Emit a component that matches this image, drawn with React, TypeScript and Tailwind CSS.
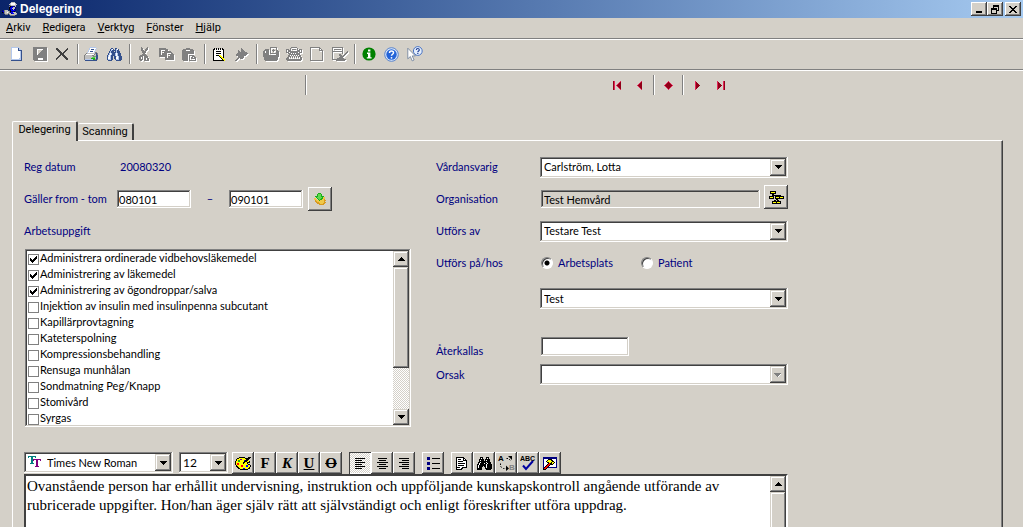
import { Fragment } from 'react'
import type { ReactNode } from 'react'
import clsx from 'clsx'

const RAISED =
  'bg-[#d4d0c8] shadow-[inset_-1px_-1px_#404040,inset_1px_1px_#fff,inset_-2px_-2px_#808080]'
const RAISED_THUMB =
  'bg-[#d4d0c8] shadow-[inset_-1px_-1px_#404040,inset_1px_1px_#d4d0c8,inset_-2px_-2px_#808080,inset_2px_2px_#fff]'
const SUNKEN =
  'shadow-[inset_-1px_-1px_#fff,inset_1px_1px_#808080,inset_-2px_-2px_#d4d0c8,inset_2px_2px_#404040]'
const DITHER =
  'bg-[conic-gradient(#fff_25%,#d4d0c8_0_50%,#fff_0_75%,#d4d0c8_0)] bg-size-[2px_2px]'

const COLORS: Record<string, string> = {
  k: '#000000',
  d: '#404040',
  g: '#808080',
  s: '#c0c0c0',
  w: '#ffffff',
  n: '#000080',
  b: '#0000ff',
  u: '#34508c',
  l: '#b4c8ec',
  y: '#ffff00',
  o: '#d89a20',
  t: '#f0c848',
  e: '#18b018',
  c: '#60d850',
  f: '#008000',
  r: '#900018',
  p: '#e02858',
  q: '#008080',
  v: '#800080',
  x: '#ff0000',
}

// one character is one pixel, a dot is transparent
function Pixels({ rows, etched }: { rows: string[]; etched?: boolean }) {
  const width = Math.max(...rows.map((r) => r.length))
  return (
    <svg
      width={width}
      height={rows.length}
      viewBox={`0 0 ${width} ${rows.length}`}
      shapeRendering="crispEdges"
      className={clsx('shrink-0', etched && 'drop-shadow-[1px_1px_0_#fff]')}
      aria-hidden="true"
    >
      {rows.map((row, y) =>
        row
          .split('')
          .map((ch, x) =>
            COLORS[ch] ? <rect key={`${x}-${y}`} x={x} y={y} width="1" height="1" fill={COLORS[ch]} /> : null,
          ),
      )}
    </svg>
  )
}

const art = {
  nurse: [
    '.........ssss...',
    '........swwwws..',
    '.......sswwwwss.',
    '........gsssss..',
    '.......gknnnns..',
    '.......knbbssn..',
    '.......kbbsssn..',
    '.......knbnsnn..',
    'n.gsss..kbbbbn..',
    'nbgssssgknnnk...',
    'kngsswsgnbbsss..',
    '..gsssgssnbbsss.',
    '...ggg.gssssssg.',
    '........ggggg...',
  ],
  newDoc: [
    'llllllll...',
    'lwwwwwwul..',
    'lwwwwwwull.',
    'lwwwwwwuuuu',
    'lwwwwwwwwlu',
    'lwwwwwwwwlu',
    'lwwwwwwwwlu',
    'lwwwwwwwwlu',
    'lwwwwwwwwlu',
    'lwwwwwwwwlu',
    'lwwwwwwwwlu',
    'lwwwwwwwllu',
    'llllllllllu',
    'uuuuuuuuuuu',
  ],
  save: [
    'gggggggggggggg',
    'gggggggggggggg',
    'gggg......gggg',
    'gggg.....ggggg',
    'gggg....gggggg',
    'gggg...ggggggg',
    'gggg..gggggggg',
    'gggg.ggggggggg',
    'gggggggggggggg',
    'gggggggggggggg',
    'gggggggggggggg',
    'gggggwwwwwgggg',
    'gggggwwwwwgggg',
    '.ggggggggggggg',
  ],
  remove: [
    'dd.........d.',
    'ddd.......dd.',
    '.ddd.....dd..',
    '..ddd...dd...',
    '...ddd.dd....',
    '....dddd.....',
    '....dddd.....',
    '...dd.ddd....',
    '..dd...ddd...',
    '.dd.....ddd..',
    'dd.......ddd.',
    'd.........dd.',
  ],
  printer: [
    '......llllll...',
    '.....lwwwwwwl..',
    '.....lwuuuwl...',
    '....lwwwwwwl...',
    '....lwuuuwl....',
    '...lwwwwwwlgg..',
    '..gssssssssgug.',
    '.gwwwwwwwwgsug.',
    'gsssssssggssuu.',
    'gssssssssggcuu.',
    'gssssssscccsuu.',
    'gsssssseeeesuu.',
    'glllllllleegug.',
    '.uuuuuuuuuuuu..',
  ],
  binoculars: [
    '....uu..uu.....',
    '...ulwu.ulwu...',
    '...uluuuuluu...',
    '..uluuu.uluuu..',
    '..uluuuuuluuu..',
    '.ulwluuulwluuu.',
    '.ulwluuulwluuu.',
    'ulwluuuulwluuu.',
    'ulwluu.uulwluuu',
    'uwwluu.uuwwluuu',
    'uwwluu.uuwwluuu',
    'ullluu..ullluuu',
    '.uuuu....uuuuu.',
  ],
  cut: [
    '..g.....g.',
    '..gg...gg.',
    '..gg..ggg.',
    '..ggg.gg..',
    '...gggg...',
    '...gggg...',
    '....gg....',
    '...gggg...',
    '.ggggggg..',
    'gggg.gggg.',
    'gg.g.gggg.',
    'gg.g.gg.gg',
    'gggg.gg.gg',
    '.gg..ggggg',
  ],
  copy: [
    'ggggggg........',
    'ggggggggg......',
    'gg....ggg......',
    'gg.ggggggggg...',
    'gg...gggggggg..',
    'gg.ggggg....gg.',
    'gg.ggggg.gggggg',
    'gggggggg...gggg',
    'gggggggg.gggggg',
    '......gg.gggggg',
    '......ggggggggg',
    '......ggggggggg',
  ],
  paste: [
    '....gggg.......',
    '.gggggggggg....',
    'gggg....gggg...',
    'gggggggggggg...',
    'gggggggggggg...',
    'gggggggggggg...',
    'gggggg.........',
    'gggggg.ggggg...',
    'gggggg.g..ggg..',
    'gggggg.g.gg.gg.',
    'gggggg.g.ggggg.',
    'gggggg.g.....g.',
    '.ggggg.ggggggg.',
  ],
  note: [
    '.k.k.k.k.k..',
    'kkwkwkwkwkk.',
    'kwwwwwwwwwk.',
    'kwwkkkkkwwk.',
    'kwwwwwwwwwk.',
    'kwwkkkkkwwk.',
    'kwwwwwwwwwk.',
    'kwwkkkyywwk.',
    'kwwwwwkyywk.',
    'kwwwwwwkyyk.',
    'kwwwwwwwkyy.',
    'kwwwwwwwwkyy',
    'kkkkkkkkkkky',
  ],
  pin: [
    '......g......',
    '......gg.....',
    '...g..ggg....',
    '...gg.gggg...',
    '...ggggggggg.',
    '..ggggggggggg',
    '.ggggggggggg.',
    '.gggggggggg..',
    '...gggggg....',
    '...gggggg....',
    '..gg.ggg.....',
    '.gg..........',
    'gg...........',
  ],
  archive: [
    '.......ggggggg..',
    '.......g.....g..',
    '..gggg.g..g..g..',
    '.ggggg.g.ggg.gg.',
    'gg.ggg.g..g..ggg',
    'gg.ggg.g.....ggg',
    'gggggg.ggggggggg',
    'gggggg.......ggg',
    'gggggggggggggggg',
    'gggggggggggggggg',
    '.gggggggggggggg.',
    '.gggggggggggggg.',
    '.gggggggggggggg.',
    '..gggggggggggg..',
  ],
  typewriter: [
    '.....gggggg.....',
    '....g......g....',
    'ggg.g.gggg.g.ggg',
    'g.ggg......ggg.g',
    'g.gggggggggggg.g',
    'ggg.gggggggg.ggg',
    '..ggg.g.g.gggg..',
    '...ggggggggggg..',
    '..gg.g.g.g.g.gg.',
    '..ggg.g.g.g.ggg.',
    '.gg.g.g.g.g.g.gg',
    'ggg...........gg',
    'gggggggggggggggg',
    '.gggggggggggggg.',
  ],
  page: [
    'gggggggggg...',
    'g........gg..',
    'g........g.g.',
    'g........gggg',
    'g...........g',
    'g...........g',
    'g...........g',
    'g...........g',
    'g...........g',
    'g...........g',
    'g...........g',
    'g...........g',
    'g...........g',
    'ggggggggggggg',
  ],
  approve: [
    'ggggggggggg.....',
    'g.........g.....',
    'g.ggggggg.g.....',
    'g.........g.....',
    'ggggggggggg....g',
    'g.........g...gg',
    'g.........g..gg.',
    'g......gg...gg..',
    'g......ggg.gg...',
    'g.......gggg....',
    'g......gggg.....',
    'g....ggggggg....',
    'gggggggggggggg..',
    '....ggggggggg...',
  ],
  first: ['rp.....p', 'rp....pr', 'rp...prr', 'rp..prrr', 'rp.prrrr', 'rp..prrr', 'rp...prr', 'rp....pr', 'rp.....p'],
  prev: ['....p', '...pr', '..prr', '.prrr', 'prrrr', '.prrr', '..prr', '...pr', '....p'],
  diamond: [
    '....p....',
    '...prp...',
    '..prrrp..',
    '.prrrrrp.',
    'prrrrrrrp',
    '.prrrrrp.',
    '..prrrp..',
    '...prp...',
    '....p....',
  ],
  next: ['p....', 'pr...', 'prr..', 'prrr.', 'prrrr', 'prrr.', 'prr..', 'pr...', 'p....'],
  last: ['p.....pr', 'pr....pr', 'prr...pr', 'prrr..pr', 'prrrr.pr', 'prrr..pr', 'prr...pr', 'pr....pr', 'p.....pr'],
  up: ['...k...', '..kkk..', '.kkkkk.', 'kkkkkkk'],
  down: ['kkkkkkk', '.kkkkk.', '..kkk..', '...k...'],
  downOff: ['ggggggg.', '.gggggw.', '..gggw..', '...gw...'],
  minimize: ['......', '......', '......', '......', '......', '......', 'kkkkkk', 'kkkkkk'],
  restore: ['..kkkkkk', '..kkkkkk', '..k....k', 'kkkkkk.k', 'kkkkkk.k', 'k....kkk', 'k....k..', 'k....k..', 'kkkkkk..'],
  close: ['kk....kk', '.kk..kk.', '..kkkk..', '...kk...', '..kkkk..', '.kk..kk.', 'kk....kk'],
  fetch: [
    '....eee.....',
    '...eccce....',
    '...eccce....',
    '.eeeccceee..',
    '..ecccccett.',
    'tt.eccceett.',
    'ttt.eceetto.',
    '.otttettttoo',
    '.oottttttto.',
    '..oootttttoo',
    '...oootttoo.',
    '.....ooooo..',
  ],
  tree: [
    '.kkkkkk........',
    '.kyyyyk........',
    '.kkkkkk........',
    '...kk..........',
    '...kkkkkkkkk...',
    'kkkkk.kkkkkkkkk',
    'kyyyk.kyyykyyyk',
    'kkkkk.kkkkkkkkk',
    '.......kk......',
    '.....kk.kk.....',
    '...kkkkkkkkk...',
    '...kyyykyyyk...',
    '...kkkkkkkkk...',
  ],
  truetype: [
    'qqqqqqqq.....',
    'q..qq..q.....',
    '...qq........',
    '...qqvvvvvvvv',
    '...qqv..vv..v',
    '...qq...vv...',
    '...qq...vv...',
    '..qqqq..vv...',
    '........vv...',
    '........vv...',
    '.......vvvv..',
  ],
  palette: [
    '....kkkkkk...kkk',
    '..kkyyyyyykkkkk.',
    '.kyyyvvyyyykkk..',
    '.kyeeyyyybkkky..',
    'kyyeeyyyykkkyyk.',
    'kyyyyyyykkyykkk.',
    'kyxxyyyykyyyk...',
    'kyxxyyyyyyyyykk.',
    '.kyyyyxxyyybbyyk',
    '.kkyyyxxyyybbyyk',
    '..kkyyyyyyyyyyk.',
    '...kkyyybbyyykk.',
    '.....kkkkkkkk...',
  ],
  left: ['kkkkkkkkkk', '..........', 'kkkkkkk...', '..........', 'kkkkkkkkkk', '..........', 'kkkkkkk...', '..........', 'kkkkkkkkkk', '..........', 'kkkkkkk...'],
  center: ['.kkkkkkkkk.', '...........', '..kkkkkkk..', '...........', 'kkkkkkkkkkk', '...........', '..kkkkkkk..', '...........', 'kkkkkkkkkkk', '...........', '..kkkkkkk..'],
  right: ['kkkkkkkkkk', '..........', '...kkkkkkk', '..........', 'kkkkkkkkkk', '..........', '...kkkkkkk', '..........', 'kkkkkkkkkk', '..........', '...kkkkkkk'],
  bullets: [
    'nnn..........',
    'nnn..kkkkkkkk',
    'nnn..........',
    '.............',
    '.............',
    'nnn..........',
    'nnn..kkkkkkkk',
    'nnn..........',
    '.............',
    '.............',
    'nnn..........',
    'nnn..kkkkkkkk',
    'nnn..........',
  ],
  phrase: [
    'kkkkkkkk....',
    'kwwwwwwkk...',
    'kwkkkwwkwk..',
    'kwwwwwwkkkk.',
    'kwkkkkkwwwk.',
    'kwwwwwwwwwk.',
    'kwkkkkkkkwk.',
    'kwwwwwwwwwk.',
    'kwkkkkkkwwk.',
    'kwwwwwwwwwk.',
    'kkkkwwkkkkk.',
    'kwwwwkk.....',
    'kkkkkk......',
  ],
  find: [
    '...kkk...kkk...',
    '...kwk...kwk...',
    '..kkkkk.kkkkk..',
    '..kwkkk.kwkkk..',
    '..kkkkkkkkkkk..',
    '.kkwkkkkkwkkkk.',
    '.kwkkkkwkkwkkk.',
    'kkwkkkkkkwkkkkk',
    'kwkkkkkkkwkkkkk',
    'kwkkkk.kkwkkkkk',
    'kwkkk...kwkkkkk',
    'kkkkk...kkkkkkk',
    'kkkkk....kkkkk.',
  ],
  macro: [
    'nnnnnnnnnnnnnn',
    'nnnnnnnnnnnnnn',
    'nwwwwkkkkwwwwn',
    'nwwwkyyykkwwwn',
    'nwwkyyyyykkwwn',
    'nwwwkkyykyykwn',
    'nwwwwkxkkykwwn',
    'nwwwkxxkkkwwwn',
    'nwwkxxkwwwwwwn',
    'nwkxxkwwwwwwwn',
    'nkxxknnnnnnnnn',
    'kxxk..........',
    'kkk...........',
  ],
  tick: ['......k', '.....kk', 'k...kkk', 'kk.kkk.', 'kkkkk..', '.kkk...', '..k....'],
}

function InfoIcon() {
  return (
    <svg width="14" height="14" viewBox="0 0 14 14" aria-hidden="true">
      <circle cx="7" cy="7" r="6.6" fill="#008000" />
      <path d="M6 2.5h2.4v2H6zM5 5.6h3.4v4.6h1.2v1.4H4.8v-1.4H6V7H5z" fill="#fff" />
    </svg>
  )
}

function HelpIcon() {
  return (
    <svg width="15" height="15" viewBox="0 0 15 15" aria-hidden="true">
      <circle cx="7.5" cy="7.5" r="6.8" fill="#d8e6fa" stroke="#5a84cc" />
      <circle cx="7.5" cy="7.5" r="5.2" fill="#2464d8" />
      <path d="M5.5 6c0-2.6 4-2.6 4-.2 0 1.5-2 1.4-2 3" fill="none" stroke="#fff" strokeWidth="1.5" />
      <circle cx="7.5" cy="10.8" r="0.9" fill="#fff" />
    </svg>
  )
}

function ContextHelpIcon() {
  return (
    <svg width="16" height="16" viewBox="0 0 16 16" aria-hidden="true">
      <circle cx="10.8" cy="5" r="4.4" fill="#e4eefc" stroke="#4a74c4" />
      <path d="M9.3 4c0-2 3-2 3-.1 0 1.1-1.5 1.1-1.5 2.3" fill="none" stroke="#1c3c94" strokeWidth="1.1" />
      <path d="M10.2 7h1.2v1.1h-1.2z" fill="#1c3c94" />
      <path d="M.8 2.2v10.6l2.6-2.3 1.8 4.4 1.9-.9-1.9-4.1h3.2z" fill="#fff" stroke="#6a7c98" strokeWidth="0.8" />
    </svg>
  )
}

function ReplaceIcon() {
  return (
    <svg width="18" height="16" viewBox="0 0 18 16" aria-hidden="true">
      <text x="1" y="6" fontSize="8" fontWeight="bold" fontFamily="Liberation Sans, sans-serif">
        A
      </text>
      <text x="12" y="15" fontSize="8" fontWeight="bold" fill="#808080" fontFamily="Liberation Sans, sans-serif">
        B
      </text>
      <path d="M3.500 8.500v3l3 2h3M9.500 3.500h2l2 2" fill="none" stroke="#000" strokeDasharray="1.500 1.500" />
      <path d="M9 10.500l3 3-3 2.500zM11 1h4v4z" />
    </svg>
  )
}

function SpellIcon() {
  return (
    <svg width="16" height="16" viewBox="0 0 16 16" aria-hidden="true">
      <text x="0" y="6" fontSize="7" fontWeight="bold" fontFamily="Liberation Sans, sans-serif">
        ABC
      </text>
      <path d="M3 10.500l3 3.500 7-8" fill="none" stroke="#0000a0" strokeWidth="2" />
    </svg>
  )
}

const menus = ['Arkiv', 'Redigera', 'Verktyg', 'Fönster', 'Hjälp']

const toolGroups: { label: string; icon: ReactNode }[][] = [
  [
    { label: 'Ny', icon: <Pixels rows={art.newDoc} /> },
    { label: 'Spara', icon: <Pixels rows={art.save} etched /> },
    { label: 'Ta bort', icon: <Pixels rows={art.remove} /> },
  ],
  [
    { label: 'Skriv ut', icon: <Pixels rows={art.printer} /> },
    { label: 'Sök', icon: <Pixels rows={art.binoculars} /> },
  ],
  [
    { label: 'Klipp ut', icon: <Pixels rows={art.cut} etched /> },
    { label: 'Kopiera', icon: <Pixels rows={art.copy} etched /> },
    { label: 'Klistra in', icon: <Pixels rows={art.paste} etched /> },
  ],
  [
    { label: 'Anteckning', icon: <Pixels rows={art.note} /> },
    { label: 'Fäst', icon: <Pixels rows={art.pin} etched /> },
  ],
  [
    { label: 'Arkivera', icon: <Pixels rows={art.archive} etched /> },
    { label: 'Diktat', icon: <Pixels rows={art.typewriter} etched /> },
    { label: 'Dokument', icon: <Pixels rows={art.page} etched /> },
    { label: 'Signera', icon: <Pixels rows={art.approve} etched /> },
  ],
  [
    { label: 'Information', icon: <InfoIcon /> },
    { label: 'Hjälp', icon: <HelpIcon /> },
    { label: 'Förklaring', icon: <ContextHelpIcon /> },
  ],
]

const tasks = [
  { name: 'Administrera ordinerade vidbehovsläkemedel', done: true },
  { name: 'Administrering av läkemedel', done: true },
  { name: 'Administrering av ögondroppar/salva', done: true },
  { name: 'Injektion av insulin med insulinpenna subcutant', done: false },
  { name: 'Kapillärprovtagning', done: false },
  { name: 'Kateterspolning', done: false },
  { name: 'Kompressionsbehandling', done: false },
  { name: 'Rensuga munhålan', done: false },
  { name: 'Sondmatning Peg/Knapp', done: false },
  { name: 'Stomivård', done: false },
  { name: 'Syrgas', done: false },
]

const formatGroups: { label: string; icon: ReactNode; pressed?: boolean }[][] = [
  [
    { label: 'Färg', icon: <Pixels rows={art.palette} /> },
    { label: 'Fet', icon: <span className="font-bold">F</span> },
    { label: 'Kursiv', icon: <span className="font-bold italic">K</span> },
    { label: 'Understruken', icon: <span className="font-bold underline">U</span> },
    { label: 'Genomstruken', icon: <span className="font-bold line-through">O</span> },
  ],
  [
    { label: 'Vänster', icon: <Pixels rows={art.left} />, pressed: true },
    { label: 'Centrera', icon: <Pixels rows={art.center} /> },
    { label: 'Höger', icon: <Pixels rows={art.right} /> },
  ],
  [{ label: 'Punktlista', icon: <Pixels rows={art.bullets} /> }],
  [
    { label: 'Frastext', icon: <Pixels rows={art.phrase} /> },
    { label: 'Sök text', icon: <Pixels rows={art.find} /> },
    { label: 'Ersätt', icon: <ReplaceIcon /> },
    { label: 'Stavning', icon: <SpellIcon /> },
    { label: 'Makro', icon: <Pixels rows={art.macro} /> },
  ],
]

const noteText =
  'Ovanstående person har erhållit undervisning, instruktion och uppföljande kunskapskontroll angående utförande av\nrubricerade uppgifter. Hon/han äger själv rätt att självständigt och enligt föreskrifter utföra uppdrag.'

function Divider() {
  return <span className="h-5 w-0.5 shrink-0 border-l border-r border-l-[#808080] border-r-white" />
}

function Combo({
  id,
  label,
  value,
  disabled,
  className,
  textClass = 'pl-1',
  icon,
}: {
  id: string
  label?: string
  value: string
  disabled?: boolean
  className?: string
  textClass?: string
  icon?: ReactNode
}) {
  return (
    <div className={clsx('relative h-[21px] shrink-0', className)}>
      <select
        id={id}
        aria-label={label}
        disabled={disabled}
        className={clsx('h-full w-full appearance-none bg-white pr-5 text-black opacity-100', SUNKEN, textClass)}
      >
        <option>{value}</option>
      </select>
      {icon && <span className="pointer-events-none absolute top-1 left-1">{icon}</span>}
      <span
        className={clsx(
          'pointer-events-none absolute top-0.5 right-0.5 bottom-0.5 grid w-4 place-items-center',
          RAISED_THUMB,
        )}
      >
        <Pixels rows={disabled ? art.downOff : art.down} />
      </span>
    </div>
  )
}

function ScrollButton({ label, rows }: { label: string; rows: string[] }) {
  return (
    <button aria-label={label} className={clsx('grid h-4 w-4 shrink-0 place-items-center', RAISED_THUMB)}>
      <Pixels rows={rows} />
    </button>
  )
}

function Field({ label, htmlFor, children }: { label: string; htmlFor?: string; children: ReactNode }) {
  return (
    <div className="flex h-8 items-center">
      <label htmlFor={htmlFor} className="w-[104px] shrink-0">
        {label}
      </label>
      {children}
    </div>
  )
}

function TitleBar() {
  return (
    <header className="flex h-[18px] shrink-0 items-center bg-linear-to-r from-[#0a246a] to-[#a6caf0] pr-0.5 pl-0.5">
      <Pixels rows={art.nurse} />
      <h1 className="ml-0.5 flex-1 font-['Liberation_Sans',Arial,sans-serif] text-[12px] font-bold text-white">
        Delegering
      </h1>
      <button aria-label="Minimera" className={clsx('grid h-3.5 w-4 place-items-center', RAISED)}>
        <Pixels rows={art.minimize} />
      </button>
      <button aria-label="Återställ" className={clsx('grid h-3.5 w-4 place-items-center', RAISED)}>
        <Pixels rows={art.restore} />
      </button>
      <button aria-label="Stäng" className={clsx('ml-0.5 grid h-3.5 w-4 place-items-center', RAISED)}>
        <Pixels rows={art.close} />
      </button>
    </header>
  )
}

function Toolbar() {
  return (
    <div className="flex h-[31px] shrink-0 items-center border-b border-[#808080] pl-[5px] shadow-[0_1px_#fff]">
      {toolGroups.map((group, i) => (
        <Fragment key={i}>
          {i > 0 && (
            <span className="flex w-1.5 justify-end pr-px">
              <Divider />
            </span>
          )}
          {group.map((tool) => (
            <button key={tool.label} aria-label={tool.label} className="grid h-[22px] w-[23px] place-items-center">
              {tool.icon}
            </button>
          ))}
        </Fragment>
      ))}
    </div>
  )
}

function RecordNav() {
  return (
    <div className="mt-[5px] mb-[26px] flex h-5 shrink-0 items-center pl-[305px]">
      <Divider />
      <div className="ml-[298px] flex items-center">
        <button aria-label="Första" className="grid w-6 place-items-center">
          <Pixels rows={art.first} />
        </button>
        <button aria-label="Föregående" className="mr-1 grid w-5 place-items-center">
          <Pixels rows={art.prev} />
        </button>
        <Divider />
        <button aria-label="Aktuell" className="grid w-[27px] place-items-center">
          <Pixels rows={art.diamond} />
        </button>
        <Divider />
        <button aria-label="Nästa" className="grid w-[27px] place-items-center">
          <Pixels rows={art.next} />
        </button>
        <button aria-label="Sista" className="grid w-5 place-items-center">
          <Pixels rows={art.last} />
        </button>
      </div>
    </div>
  )
}

function TaskList() {
  return (
    <div className={clsx('ml-px flex h-[178px] bg-white p-0.5 text-black', SUNKEN)}>
      <ul className="flex-1 overflow-hidden">
        {tasks.map((task) => (
          <li key={task.name}>
            <label className="flex h-4 gap-px pl-px">
              <span className="relative mt-[3px] h-[11px] w-[11px] shrink-0">
                <input
                  type="checkbox"
                  defaultChecked={task.done}
                  className="peer block h-full w-full appearance-none border border-[#808080] bg-white"
                />
                <span className="pointer-events-none absolute top-0.5 left-0.5 hidden peer-checked:block">
                  <Pixels rows={art.tick} />
                </span>
              </span>
              <span className="leading-[14px]">{task.name}</span>
            </label>
          </li>
        ))}
      </ul>
      <div className={clsx('flex w-4 flex-col', DITHER)}>
        <ScrollButton label="Upp" rows={art.up} />
        <div className={clsx('h-[101px]', RAISED_THUMB)} />
        <div className="flex-1" />
        <ScrollButton label="Ned" rows={art.down} />
      </div>
    </div>
  )
}

function LeftColumn() {
  return (
    <div>
      <div className="flex h-8 items-center">
        <span className="w-24">Reg datum</span>
        <span>20080320</span>
      </div>
      <div className="flex h-8 items-center">
        <label htmlFor="from" className="w-[93px]">
          Gäller from - tom
        </label>
        <input
          id="from"
          defaultValue="080101"
          className={clsx('h-[18px] w-[74px] bg-white px-0.5 text-black', SUNKEN)}
        />
        <span className="w-[38px] text-center">–</span>
        <input
          aria-label="Gäller tom"
          defaultValue="090101"
          className={clsx('h-[18px] w-[74px] bg-white px-0.5 text-black', SUNKEN)}
        />
        <button aria-label="Hämta datum" className={clsx('ml-[5px] grid h-6 w-6 place-items-center', RAISED)}>
          <Pixels rows={art.fetch} />
        </button>
      </div>
      <div className="mb-0.5 flex h-8 items-center">Arbetsuppgift</div>
      <TaskList />
    </div>
  )
}

function Radio({ label, checked }: { label: string; checked?: boolean }) {
  return (
    <label className="flex w-[100px] items-center gap-[5px]">
      <input
        type="radio"
        name="plats"
        defaultChecked={checked}
        className="h-3 w-3 appearance-none rounded-full border border-[#808080] border-r-white border-b-white bg-white shadow-[inset_1px_1px_#404040] checked:bg-[radial-gradient(circle,#000_2px,#fff_3px)]"
      />
      {label}
    </label>
  )
}

function RightColumn() {
  return (
    <div>
      <Field label="Vårdansvarig" htmlFor="ansvarig">
        <Combo id="ansvarig" value="Carlström, Lotta" className="flex-1" />
      </Field>
      <Field label="Organisation" htmlFor="organisation">
        <input
          id="organisation"
          readOnly
          defaultValue="Test Hemvård"
          className={clsx('ml-px h-[18px] min-w-0 flex-1 bg-[#d4d0c8] px-[3px] text-black', SUNKEN)}
        />
        <button aria-label="Välj organisation" className={clsx('mb-1 ml-1 grid h-6 w-6 place-items-center', RAISED)}>
          <Pixels rows={art.tree} />
        </button>
      </Field>
      <Field label="Utförs av" htmlFor="utfors">
        <Combo id="utfors" value="Testare Test" className="flex-1" />
      </Field>
      <Field label="Utförs på/hos">
        <div className="ml-px flex">
          <Radio label="Arbetsplats" checked />
          <Radio label="Patient" />
        </div>
      </Field>
      <div className="mt-[9px] mb-7 flex pl-[104px]">
        <Combo id="plats" label="Plats" value="Test" className="flex-1" />
      </div>
      <div className="flex h-[27px] items-center">
        <label htmlFor="aterkallas" className="w-[105px]">
          Återkallas
        </label>
        <input id="aterkallas" className={clsx('h-[19px] w-[88px] self-start bg-white px-0.5 text-black', SUNKEN)} />
      </div>
      <div className="flex items-center">
        <label htmlFor="orsak" className="w-[104px]">
          Orsak
        </label>
        <Combo id="orsak" value="" disabled className="flex-1" />
      </div>
    </div>
  )
}

function FormatBar() {
  return (
    <div className="mt-[25px] flex h-[22px] shrink-0 items-start text-black">
      <Combo
        id="font"
        label="Teckensnitt"
        value="Times New Roman"
        className="w-[149px]"
        textClass="pl-[23px]"
        icon={<Pixels rows={art.truetype} />}
      />
      <Combo id="size" label="Storlek" value="12" className="ml-1.5 w-[49px] text-[12px]" />
      <div className="ml-1 flex gap-[7px]">
        {formatGroups.map((group, i) => (
          <div key={i} className="flex">
            {group.map((tool) => (
              <button
                key={tool.label}
                aria-label={tool.label}
                aria-pressed={tool.pressed}
                className={clsx(
                  "grid h-[22px] w-[22px] place-items-center font-['Liberation_Serif',serif] text-[15px] leading-4",
                  tool.pressed ? [DITHER, 'shadow-[inset_1px_1px_#404040,inset_-1px_-1px_#fff]'] : RAISED,
                )}
              >
                {tool.icon}
              </button>
            ))}
          </div>
        ))}
      </div>
    </div>
  )
}

export default function App() {
  return (
    <div className="flex h-screen flex-col overflow-hidden bg-[#d4d0c8] font-['Roboto',Arial,sans-serif] text-[11px] leading-4 text-black">
      <TitleBar />
      <nav className="flex h-[21px] shrink-0 items-center gap-3 border-b border-[#808080] pl-1.5 shadow-[0_1px_#fff]">
        {menus.map((menu) => (
          <button key={menu}>
            <span className="underline">{menu[0]}</span>
            {menu.slice(1)}
          </button>
        ))}
      </nav>
      <Toolbar />
      <RecordNav />

      <main className="mr-5 ml-3 flex min-h-0 flex-1 flex-col">
        <div role="tablist" className="flex shrink-0 items-end">
          <button
            role="tab"
            aria-selected="true"
            className="relative -mb-px h-5 w-[66px] rounded-t-[2px] border-t border-r-2 border-l border-t-white border-r-[#404040] border-l-white bg-[#d4d0c8] pb-1"
          >
            Delegering
          </button>
          <button
            role="tab"
            aria-selected="false"
            className="h-[17px] w-14 rounded-t-[2px] border-t border-r-2 border-t-white border-r-[#404040]"
          >
            Scanning
          </button>
        </div>
        <section className="flex min-h-0 flex-1 flex-col border-t border-r border-l border-t-white border-r-[#404040] border-l-white pt-2.5 pl-[11px] font-['Lato',Arial,sans-serif] text-[#000080] shadow-[inset_-1px_0_#808080]">
          <div className="grid shrink-0 grid-cols-[387px_352px] gap-[25px]">
            <LeftColumn />
            <RightColumn />
          </div>
          <FormatBar />
          <div className="flex min-h-0 w-[764px] flex-1 border-t-2 border-r-2 border-l-2 border-t-[#404040] border-r-white border-l-[#404040] bg-white">
            <textarea
              aria-label="Text"
              defaultValue={noteText}
              className="min-w-0 flex-1 resize-none overflow-hidden pt-px pl-px font-['Liberation_Serif',serif] text-[15px] leading-[19px] text-black outline-none"
            />
            <div className="flex w-4 flex-col">
              <ScrollButton label="Rulla upp" rows={art.up} />
              <div className={clsx('-mb-1 flex-1', RAISED_THUMB)} />
            </div>
          </div>
        </section>
      </main>
    </div>
  )
}
